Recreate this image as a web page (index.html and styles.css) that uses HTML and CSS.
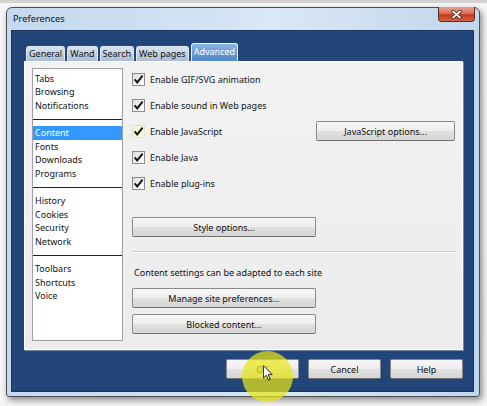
FILE: index.html
```html
<!DOCTYPE html>
<html>
<head>
<meta charset="utf-8">
<title>Preferences</title>
<link rel="stylesheet" href="styles.css">
</head>
<body>
<div class="window">
  <div class="titlebar">
    <span class="title">Preferences</span>
    <span class="close">
      <svg width="11" height="9" viewBox="0 0 11 9"><path d="M2 1.5 L9 7.5 M9 1.5 L2 7.5" stroke="#4a1c14" stroke-width="3.4" stroke-linecap="round"/><path d="M2 1.5 L9 7.5 M9 1.5 L2 7.5" stroke="#ffffff" stroke-width="1.7" stroke-linecap="round"/></svg>
    </span>
  </div>
  <div class="client">
    <div class="tabs">
      <div class="tab">General</div>
      <div class="tab">Wand</div>
      <div class="tab">Search</div>
      <div class="tab">Web pages</div>
      <div class="tab active">Advanced</div>
    </div>
    <div class="panel">
      <div class="list">
        <div class="group first">
          <div class="item">Tabs</div>
          <div class="item">Browsing</div>
          <div class="item">Notifications</div>
        </div>
        <div class="group">
          <div class="item selected">Content</div>
          <div class="item">Fonts</div>
          <div class="item">Downloads</div>
          <div class="item">Programs</div>
        </div>
        <div class="group">
          <div class="item">History</div>
          <div class="item">Cookies</div>
          <div class="item">Security</div>
          <div class="item">Network</div>
        </div>
        <div class="group">
          <div class="item">Toolbars</div>
          <div class="item">Shortcuts</div>
          <div class="item">Voice</div>
        </div>
      </div>
      <div class="content">
        <div class="row">
          <span class="check"><svg width="13" height="13" viewBox="0 0 13 13"><path d="M2.6 6.4 L5.2 9.4 L10.6 2.6" fill="none" stroke="#111" stroke-width="1.9"/></svg></span>
          <span class="label">Enable GIF/SVG animation</span>
        </div>
        <div class="row">
          <span class="check"><svg width="13" height="13" viewBox="0 0 13 13"><path d="M2.6 6.4 L5.2 9.4 L10.6 2.6" fill="none" stroke="#111" stroke-width="1.9"/></svg></span>
          <span class="label">Enable sound in Web pages</span>
        </div>
        <div class="row">
          <span class="check hot"><svg width="13" height="13" viewBox="0 0 13 13"><path d="M2.6 6.4 L5.2 9.4 L10.6 2.6" fill="none" stroke="#111" stroke-width="1.9"/></svg></span>
          <span class="label">Enable JavaScript</span>
          <button class="btn js-btn">JavaScript options...</button>
        </div>
        <div class="row">
          <span class="check"><svg width="13" height="13" viewBox="0 0 13 13"><path d="M2.6 6.4 L5.2 9.4 L10.6 2.6" fill="none" stroke="#111" stroke-width="1.9"/></svg></span>
          <span class="label">Enable Java</span>
        </div>
        <div class="row">
          <span class="check"><svg width="13" height="13" viewBox="0 0 13 13"><path d="M2.6 6.4 L5.2 9.4 L10.6 2.6" fill="none" stroke="#111" stroke-width="1.9"/></svg></span>
          <span class="label">Enable plug-ins</span>
        </div>
        <button class="btn wide style-btn">Style options...</button>
        <div class="sep"></div>
        <div class="note">Content settings can be adapted to each site</div>
        <button class="btn wide manage-btn">Manage site preferences...</button>
        <button class="btn wide blocked-btn">Blocked content...</button>
      </div>
    </div>
    <div class="actions">
      <button class="btn dlg">OK</button>
      <button class="btn dlg">Cancel</button>
      <button class="btn dlg">Help</button>
    </div>
  </div>
</div>
<div class="spot"></div>
<svg class="cursor" width="10" height="16" viewBox="0 0 12 19"><path d="M0.5 0.5 L0.5 15.5 L4 12.2 L6.6 18 L8.8 17 L6.3 11.4 L11 11.4 Z" fill="#fff" stroke="#000" stroke-width="1" stroke-linejoin="round"/></svg>
</body>
</html>
```

FILE: styles.css
```css
html, body {
  margin: 0;
  padding: 0;
}
body {
  width: 487px;
  height: 406px;
  overflow: hidden;
  position: relative;
  background: linear-gradient(#d2d2d2 0, #d2d2d2 3px, #f6f6f6 3px, #f4f4f4 100%);
  font-family: "Noto Sans", "Open Sans", sans-serif;
  font-size: 9px;
  color: #111;
}
.window {
  box-sizing: border-box;
  margin: 7px 0 0 6px;
  width: 474px;
  height: 390px;
  border: 1px solid #4b4f55;
  border-radius: 6px 6px 3px 3px;
  background: linear-gradient(90deg, #c4d9ef 0%, #d2e3f4 45%, #dbe8f5 55%, #c0d6ed 100%);
  padding: 0 5px 4px 4px;
  box-shadow: 2px 3px 6px rgba(0,0,0,0.45);
}
.titlebar {
  height: 22px;
  display: flex;
  align-items: flex-start;
  justify-content: space-between;
}
.title {
  padding-left: 2px;
  line-height: 21px;
  font-size: 9.3px;
  color: #111;
}
.close {
  box-sizing: border-box;
  width: 37px;
  height: 15px;
  margin-top: -1px;
  margin-right: -1px;
  border: 1px solid #5e2a22;
  border-top: none;
  border-radius: 0 0 4px 4px;
  background: linear-gradient(#e7a494 0%, #d9705a 45%, #c2391f 55%, #d36347 100%);
  display: flex;
  align-items: center;
  justify-content: center;
}
.client {
  box-sizing: border-box;
  height: 362px;
  border: 1px solid #1a355d;
  background: repeating-linear-gradient(#25497f 0, #25497f 1px, #1e4276 1px, #1e4276 2px);
  padding: 12px 10px 0 0;
}
.tabs {
  display: flex;
  align-items: flex-end;
  gap: 2px;
  height: 18px;
  margin-left: 14px;
}
.tab {
  box-sizing: border-box;
  height: 15px;
  padding: 0 2px;
  border: 1px solid #dfe7f1;
  border-bottom: none;
  border-radius: 3px 3px 0 0;
  background: linear-gradient(#d9e3ef 0%, #c2d1e4 50%, #a9bdd8 100%);
  color: #111;
  line-height: 14px;
  text-align: center;
}
.tab.active {
  height: 18px;
  line-height: 16px;
  border-color: #eef4fb;
  background: linear-gradient(#8ab4e2 0%, #6c9ed6 50%, #4f88c9 100%);
  color: #ffffff;
}
.panel {
  box-sizing: border-box;
  margin-left: 12px;
  width: 439px;
  height: 289px;
  border: 1px solid #ffffff;
  box-shadow: 1px 1px 0 #6f86a8;
  background: linear-gradient(#f2f2f3, #ececed);
  padding: 4px 7px 0 7px;
  display: flex;
  gap: 9px;
}
.list {
  box-sizing: border-box;
  margin-top: 2px;
  width: 91px;
  height: 273px;
  border: 1px solid #9ca1a8;
  background: #ffffff;
}
.group {
  padding: 6.5px 0;
  border-top: 1px solid #222;
}
.group.first {
  padding-top: 2.5px;
  border-top: none;
}
.item {
  height: 13.5px;
  line-height: 13.5px;
  padding-left: 2px;
  white-space: nowrap;
}
.item.selected {
  background: #3399ff;
  color: #ffffff;
}
.content {
  width: 323px;
  display: flex;
  flex-direction: column;
  align-items: flex-start;
}
.row {
  align-self: stretch;
  height: 26px;
  display: flex;
  align-items: center;
}
.check {
  box-sizing: border-box;
  width: 13px;
  height: 13px;
  border: 1px solid #8b8d90;
  background: linear-gradient(135deg, #dcdde0 0%, #f4f4f5 60%, #ffffff 100%);
  position: relative;
  flex: none;
}
.check svg {
  position: absolute;
  left: -1px;
  top: -1px;
}
.check.hot {
  border-color: #e2e2c8;
  background: #f6f6dc;
}
.label {
  margin-left: 5px;
  white-space: nowrap;
}
.btn {
  box-sizing: border-box;
  height: 20px;
  padding: 0;
  border: 1px solid #8a8a8a;
  border-bottom-color: #6f6f6f;
  border-radius: 2px;
  background: linear-gradient(#f7f7f7 0%, #eeeeee 48%, #e0e0e0 52%, #d6d6d6 100%);
  font-family: inherit;
  font-size: 9px;
  color: #111;
  text-align: center;
}
.js-btn {
  margin-left: auto;
  width: 139px;
}
.wide {
  width: 184px;
}
.style-btn {
  margin-top: 21px;
}
.sep {
  align-self: stretch;
  margin-top: 14px;
  height: 1px;
  background: #c9cbcf;
  border-bottom: 1px solid #ffffff;
}
.note {
  margin-top: 12px;
  margin-left: 2px;
  line-height: 15px;
}
.manage-btn {
  margin-top: 8px;
}
.blocked-btn {
  margin-top: 6px;
}
.actions {
  margin-top: 9px;
  display: flex;
  justify-content: flex-end;
  gap: 9px;
}
.dlg {
  width: 73px;
}
.spot {
  position: absolute;
  left: 242px;
  top: 351px;
  width: 51px;
  height: 51px;
  border-radius: 50%;
  background: rgba(232, 228, 24, 0.72);
}
.cursor {
  position: absolute;
  left: 263px;
  top: 365px;
}
```
